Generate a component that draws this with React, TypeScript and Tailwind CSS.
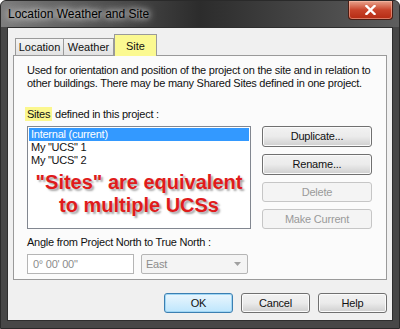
import React from "react";

const ui = { fontFamily: '"Liberation Sans", Arial, sans-serif' };

function Btn({ label, disabled, primary, className = "" }: { label: string; disabled?: boolean; primary?: boolean; className?: string }) {
  return (
    <div
      className={
        "flex items-center justify-center rounded-[3px] border text-[11px] leading-none tracking-[-0.2px] " +
        (disabled
          ? "border-[#c6c6c6] bg-[#f4f4f4] text-[#9a9a9a] "
          : primary
          ? "border-[#3c7fb1] bg-gradient-to-b from-[#eaf6fd] to-[#bee6fd] text-[#111] shadow-[inset_0_0_0_1px_#9fd6f5] "
          : "border-[#707070] bg-gradient-to-b from-[#f2f2f2] via-[#ebebeb] to-[#cfcfcf] text-[#111] shadow-[inset_0_0_0_1px_#fbfbfb] ") +
        className
      }
    >
      {label}
    </div>
  );
}

export default function App() {
  return (
    <div
      className="relative w-[400px] h-[329px] overflow-hidden rounded-t-[6px] border border-[#2a2a2a] bg-[#474747]"
      style={ui}
    >
      {/* title bar */}
      <div className="flex h-[26px] items-center bg-gradient-to-r from-[#7d7d7d] via-[#2c2c2c] to-[#5e5e5e] pl-[7px]">
        <span className="text-[12px] text-black [text-shadow:0_0_6px_#fff,0_0_10px_#ddd]">Location Weather and Site</span>
      </div>
      <div className="absolute right-[6px] top-0 flex h-[19px] w-[45px] items-center justify-center rounded-b-[4px] border border-t-0 border-[#4a1d14] bg-gradient-to-b from-[#e7a28c] via-[#c8432a] to-[#b52a12] shadow-[inset_0_0_0_1px_rgba(255,200,180,0.5)]">
        <svg width="11" height="10" viewBox="0 0 11 10">
          <path d="M1.5 1 L9.5 9 M9.5 1 L1.5 9" stroke="#fff" strokeWidth="2.4" strokeLinecap="square" />
        </svg>
      </div>

      {/* client */}
      <div className="ml-[6px] h-[294px] w-[386px] border border-[#2e2e2e] bg-[#f0f0f0]">
        {/* tabs */}
        <div className="ml-[6px] mt-[5px] flex h-[22px] items-end">
          <div className="ml-[1px] flex h-[17px] w-[49px] items-center justify-center border border-b-0 border-[#9a9a9a] bg-gradient-to-b from-[#f4f4f4] to-[#e2e2e2] text-[11px] text-[#111]">Location</div>
          <div className="flex h-[17px] w-[50px] items-center justify-center border border-b-0 border-l-0 border-[#9a9a9a] bg-gradient-to-b from-[#f4f4f4] to-[#e2e2e2] text-[11px] text-[#111]">Weather</div>
          <div className="relative z-10 mb-[-1px] flex h-[22px] w-[43px] items-start justify-center border border-b-0 border-[#9a9a9a] bg-[#fbf991] pt-[3px] text-[11px] text-[#111]">Site</div>
        </div>
        {/* panel */}
        <div className="ml-[5px] h-[225px] w-[374px] border border-[#9a9a9a] bg-[#fbfbfb] pl-[13px] text-[11px] tracking-[-0.25px]">
          <p className="mt-[8px] whitespace-nowrap leading-[13px] text-[#111]">
            Used for orientation and position of the project on the site and in relation to
            <br />
            other buildings. There may be many Shared Sites defined in one project.
          </p>
          <div className="mt-[18px] whitespace-nowrap leading-[13px] text-[#111]">
            <span className="-ml-[2px] bg-[#fbf78e] px-[2px] py-[1px]">Sites</span> defined in this project :
          </div>
          <div className="mt-[5px] flex">
            <div className="h-[103px] w-[224px] border border-[#828790] bg-white p-[1px] leading-[13px] text-[#111]">
              <div className="bg-[#3399ff] pl-[2px] text-white">Internal (current)</div>
              <div className="pl-[2px]">My "UCS" 1</div>
              <div className="pl-[2px]">My "UCS" 2</div>
              <div className="mt-[4px] text-center text-[20px] font-bold leading-[23px] tracking-normal text-[#e01b1b] [text-shadow:2px_2px_2px_rgba(0,0,0,0.35)]">
                "Sites" are equivalent
                <br />
                to multiple UCSs
              </div>
            </div>
            <div className="ml-[11px] flex flex-col gap-[7px]">
              <Btn label="Duplicate..." className="h-[21px] w-[110px]" />
              <Btn label="Rename..." className="h-[21px] w-[110px]" />
              <Btn label="Delete" disabled className="h-[20px] w-[110px]" />
              <Btn label="Make Current" disabled className="h-[20px] w-[110px]" />
            </div>
          </div>
          <div className="mt-[7px] whitespace-nowrap leading-[13px] text-[#111]">Angle from Project North to True North :</div>
          <div className="mt-[5px] flex gap-[7px]">
            <div className="flex h-[20px] w-[107px] items-center border border-[#b5b5b5] bg-white pl-[5px] text-[#8c8c8c]">0° 00' 00"</div>
            <div className="flex h-[20px] w-[107px] items-center justify-between rounded-[2px] border border-[#b5b5b5] bg-[#f4f4f4] pl-[4px] pr-[6px] text-[#8c8c8c]">
              <span>East</span>
              <svg width="7" height="4" viewBox="0 0 7 4">
                <path d="M0 0 L7 0 L3.5 4 Z" fill="#a0a0a0" />
              </svg>
            </div>
          </div>
        </div>
        {/* bottom buttons */}
        <div className="mr-[5px] mt-[13px] flex justify-end gap-[8px]">
          <Btn label="OK" primary className="h-[20px] w-[69px]" />
          <Btn label="Cancel" className="h-[20px] w-[69px]" />
          <Btn label="Help" className="h-[20px] w-[69px]" />
        </div>
      </div>
    </div>
  );
}
